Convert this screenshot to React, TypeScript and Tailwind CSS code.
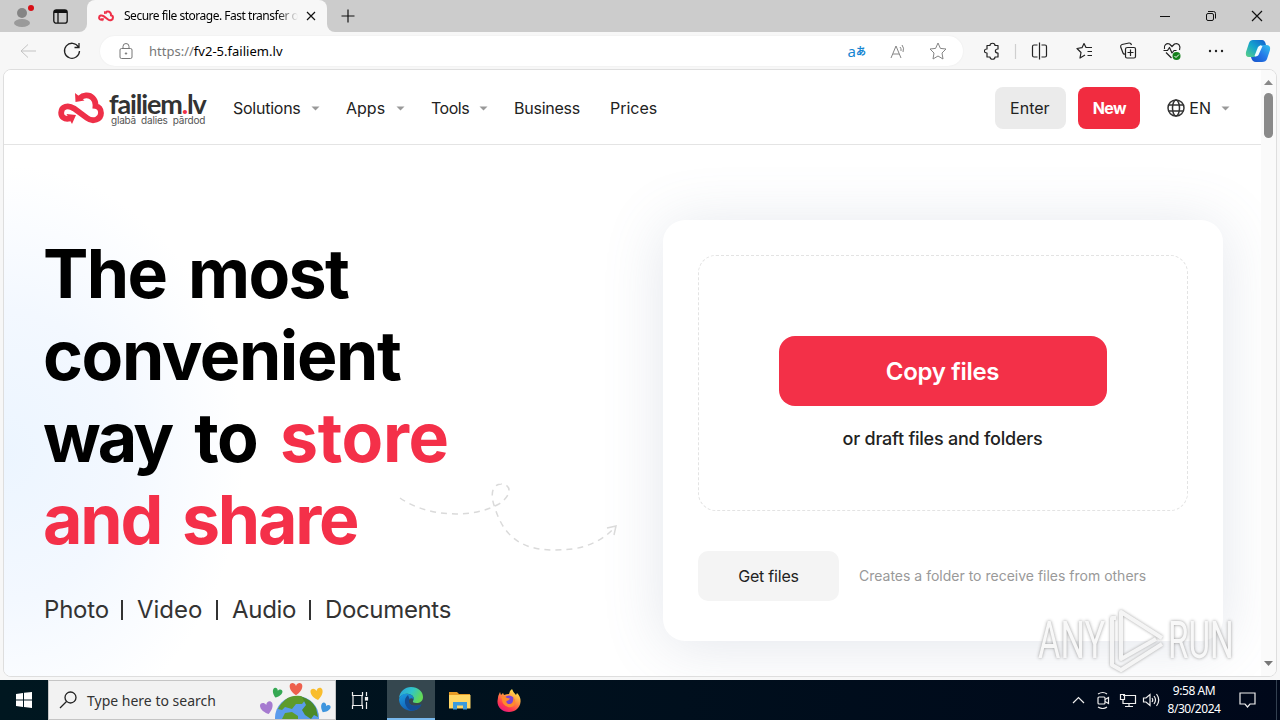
import React from 'react'

const CloudLogo: React.FC<{ className: string }> = ({ className }) => (
  <svg viewBox="0 0 46 32" className={className} fill="none" stroke="#ee3048">
    <path
      d="M12 26.500C6 28 3 24.500 3.200 20.500C3.400 14.500 10 12.500 16 16.500L29 26C35 30.500 43 27.500 43 21C43 17 40.500 14.500 37.500 14C38 7 33 3 28 3.400C25.500 3.600 24 4 22 6"
      strokeWidth="5.800"
    />
    <path d="M8.500 22L18 23L14 32ZM17 1L17.500 10L26.500 8.500Z" fill="#ee3048" stroke="none" />
  </svg>
)

const TabStrip = () => (
  <div className="flex h-8 shrink-0 bg-[#f7f7f7] text-black">
    <div className="flex w-[87px] items-center rounded-br-lg bg-[#cccccc]">
      <svg className="ml-3 h-6 w-6" viewBox="0 0 24 24">
        <circle cx="10" cy="9" r="5" fill="#858585" />
        <ellipse cx="10" cy="19" rx="8" ry="4" fill="#9a9a9a" />
        <circle cx="19" cy="4" r="3" fill="#d80f16" />
      </svg>
      <svg className="ml-[17px] h-[15px] w-[15px]" viewBox="0 0 15 15" fill="none" stroke="#111">
        <rect x=".8" y=".8" width="13.400" height="13.400" rx="2.500" strokeWidth="1.300" />
        <path d="M1 2.500H14" strokeWidth="3" />
        <path d="M5 3.500V14" strokeWidth="1.300" />
      </svg>
    </div>
    <div className="w-60 shrink-0 bg-[#cccccc]">
      <div className="flex h-8 items-center rounded-t-lg bg-[#f7f7f7] pl-[11px]">
        <CloudLogo className="h-3 w-4" />
        <span className="ml-2.5 w-[174px] overflow-hidden whitespace-nowrap text-xs tracking-[-0.49px] [mask-image:linear-gradient(to_right,black_88%,transparent)]">
          Secure file storage. Fast transfer of
        </span>
        <svg className="ml-[7px] h-3 w-3" viewBox="0 0 12 12" stroke="#111" strokeWidth="1.200">
          <path d="M2 2L10 10M10 2L2 10" />
        </svg>
      </div>
    </div>
    <div className="flex grow rounded-bl-lg bg-[#cccccc]">
      <svg className="mt-[9px] ml-[14px] h-[14px] w-[14px]" viewBox="0 0 14 14" stroke="#111" strokeWidth="1.200">
        <path d="M7 .5V13.500M.5 7H13.500" />
      </svg>
      <svg className="mt-[10px] mr-[17px] ml-auto h-3 w-[104px]" viewBox="0 0 104 12" fill="none" stroke="#111">
        <path d="M1 6.500H11" />
        <rect x="47.500" y="3.500" width="7" height="7" rx="1.500" />
        <path d="M49 1.500H54.500Q56.500 1.500 56.500 3.500V8.500" />
        <path d="M93 1L103 11M103 1L93 11" strokeWidth="1.200" />
      </svg>
    </div>
  </div>
)

const toolbarIcons = [
  { name: 'extensions', x: 0, d: 'M3 3.500H6C6 .5 11 .5 11 3.500H14V7C10.500 7 10.500 11 14 11V15H11C11 18 6 18 6 15H3V11C-.5 11-.5 7 3 7Z' },
  { name: 'split', x: 47, d: 'M6.500 3H3Q1.500 3 1.500 4.500V13.500Q1.500 15 3 15H6.500M10.500 3H14Q15.500 3 15.500 4.500V13.500Q15.500 15 14 15H10.500M8.500 .5V17.500' },
  { name: 'favorites', x: 92, d: 'M9 13L4 16L5 10.500L1 6.500L6 5.700L8 1.500L10 5.500H16M11.500 9.500H16M11.500 13.500H16' },
  { name: 'collections', x: 135.5, d: 'M6 12Q4 12.500 3.500 11L1.200 5Q.8 3 2.500 2.500L9.500 1Q11.500 .800 12 3M8 5.500H14.500Q16 5.500 16 7V14.500Q16 16 14.500 16H7.500Q6 16 6 14.500V7Q6 5.500 8 5.500M11 7.500V14M8 10.500H14' },
  { name: 'essentials', x: 179.5, d: 'M1 7C0 3 3 1 6 2L8.500 4.500L11 2C15 .5 17.500 4 16 8M2.500 10.500L8 16M0 8.500H4L6 5.500L8.500 11L10.500 8.500H13' },
]

const Toolbar = () => (
  <div className="flex h-[38px] shrink-0 items-center bg-[#f7f7f7]">
    <svg className="ml-5 h-4 w-4" viewBox="0 0 16 16" fill="none" stroke="#c3c3c3">
      <path d="M16 8H1M8 1.500L1 8L8 14.500" />
    </svg>
    <svg className="ml-[27px] h-[18px] w-[18px]" viewBox="0 0 18 18" fill="none" stroke="#222" strokeWidth="1.300">
      <path d="M15.500 5A7.500 7.500 0 1 0 16.500 9M16 1V5.500H11.500" />
    </svg>
    <div className="ml-[19px] flex h-[30px] w-[863px] items-center rounded-full bg-white pl-[19px] shadow-[0_0_2px_#00000010]">
      <svg className="h-[17px] w-[14px]" viewBox="0 0 14 17" fill="none" stroke="#777">
        <rect x="1" y="5.500" width="12" height="10" rx="1.500" />
        <path d="M4 5.500V3.500A3 3 0 0 1 10 3.500V5.500" />
        <circle cx="7" cy="10.500" r=".7" fill="#777" />
      </svg>
      <span className="mt-px ml-4 text-[13px] text-[#777]">
        https://<span className="tracking-[0.02px] text-black">fv2-5.failiem.lv</span>
      </span>
      <span className="ml-auto flex items-center text-[#1686d2]">
        <span className="text-[15px] leading-5">a</span>
        <span className="font-['Noto_Sans_CJK_JP',sans-serif] text-[10px] leading-5 font-bold">あ</span>
      </span>
      <svg className="ml-6 h-4 w-[17px]" viewBox="0 0 17 16" fill="none" stroke="#858585">
        <path d="M1 15L6 3L11 15M3 11H9M10 4Q11.500 5.500 11 8M12 2Q14.500 5 13 9" />
      </svg>
      <svg className="mr-4 ml-[22px] h-[18px] w-[18px]" viewBox="0 0 18 18" fill="none" stroke="#858585" strokeLinejoin="round">
        <path d="M9 1L11.400 6.400L17 7L13 11L14 17L9 14L4 17L5 11L1 7L6.600 6.400Z" />
      </svg>
    </div>
    <svg className="ml-[21px] h-[18px] w-[200px]" viewBox="0 0 200 18" fill="none" stroke="#222" strokeWidth="1.200" strokeLinejoin="round">
      {toolbarIcons.map((icon) => (
        <path key={icon.name} d={icon.d} transform={`translate(${icon.x})`} />
      ))}
      <path d="M31.500 2V17" stroke="#cfcfcf" />
      <circle cx="192.500" cy="14" r="4" fill="#14801b" stroke="none" />
      <path d="M190.500 14L192 15.500L195 12.500" stroke="white" strokeWidth="1" />
    </svg>
    <svg className="ml-[24px] h-1 w-4" viewBox="0 0 16 4" fill="#222">
      <circle cx="2" cy="2" r="1.200" />
      <circle cx="8" cy="2" r="1.200" />
      <circle cx="14" cy="2" r="1.200" />
    </svg>
    <svg className="ml-[21px] h-6 w-[26px]" viewBox="0 0 26 24">
      <defs>
        <linearGradient id="pilotA" x1="0" y1="1" x2="1" y2="0">
          <stop stopColor="#60d480" />
          <stop offset=".5" stopColor="#14a4cd" />
          <stop offset="1" stopColor="#145dd0" />
        </linearGradient>
        <linearGradient id="pilotB" x1="0" y1="1" x2="1" y2="0">
          <stop stopColor="#1550c8" />
          <stop offset=".5" stopColor="#2478e8" />
          <stop offset="1" stopColor="#32c4ee" />
        </linearGradient>
      </defs>
      <path d="M8 1H17Q20 1 21 6H17Q14 6 13 10L11 17Q10 20 6 18H4Q0 18 1 13L4 4Q5 1 8 1Z" fill="url(#pilotA)" />
      <path d="M16 6H21Q26 6 25 11L22 20Q21 23 17 23H11Q7 23 6 18H9Q12 18 13 14L15 8Q15.500 6 16 6Z" fill="url(#pilotB)" />
      <path d="M13 8Q15 5.500 17.500 7L13.500 16Q12 18 9.500 17Z" fill="#effcff" />
    </svg>
  </div>
)

const Caret = () => (
  <svg className="h-[5px] w-[9px]" viewBox="0 0 9 5" fill="#999">
    <path d="M.5 .5H8.500L4.500 4.500Z" />
  </svg>
)

const SiteHeader = () => (
  <header className="flex h-[75px] items-center border-b border-[#e4e4e4] bg-white pt-0.5 pl-[54px] text-[#222]">
    <CloudLogo className="h-8 w-[46px]" />
    <div className="ml-[5px] w-[100px] whitespace-nowrap">
      <div className="font-['Lato',sans-serif] text-[27px] leading-[24px] font-bold tracking-[-1.15px] text-[#333]">
        failiem<span className="text-[#ee3048]">.</span>lv
      </div>
      <div className="pl-0.5 text-[10px] leading-[9px] tracking-[-0.2px] text-[#555] [word-spacing:2.5px]">glabā dalies pārdod</div>
    </div>
    <nav className="ml-6 flex items-center text-base">
      <div className="flex w-[113px] items-center gap-[10px] tracking-[-0.25px]">Solutions <Caret /></div>
      <div className="flex w-[85px] items-center gap-[11px]">Apps <Caret /></div>
      <div className="flex w-[83px] items-center gap-[10px] tracking-[-0.5px]">Tools <Caret /></div>
      <div className="w-24 tracking-[-0.25px]">Business</div>
      <div>Prices</div>
    </nav>
    <div className="ml-auto flex items-center text-base">
      <div className="flex h-[42px] w-[71px] items-center justify-center rounded-lg bg-[#ebebeb] pr-0.5">Enter</div>
      <div className="ml-3 flex h-[42px] w-[62px] items-center justify-center rounded-lg bg-[#f12c40] font-bold tracking-[-0.6px] text-white">New</div>
      <svg className="ml-[27px] h-[18px] w-[18px]" viewBox="0 0 18 18" fill="none" stroke="#333" strokeWidth="1.500">
        <circle cx="9" cy="9" r="8" />
        <ellipse cx="9" cy="9" rx="3.500" ry="8" />
        <path d="M1.500 6H16.500M1.500 12H16.500" />
      </svg>
      <span className="mr-2.5 ml-1">EN</span>
      <Caret />
      <span className="w-[31px]" />
    </div>
  </header>
)

const Hero = () => (
  <main className="relative flex h-[532px] overflow-hidden bg-[radial-gradient(ellipse_240px_290px_at_0px_310px,#ecf5ff_0%,#f3f8ff_50%,white_100%)]">
    <section className="w-[659px] shrink-0 pt-[87px] pl-[39px]">
      <h1 className="text-[68px] leading-[82px] font-bold whitespace-nowrap text-black">
        <div className="tracking-[-1.6px] [word-spacing:7px]">The most</div>
        <div className="tracking-[-1.4px]">convenient</div>
        <div className="[word-spacing:8px]">
          <span className="tracking-[-2.8px]">way</span>
          <span className="tracking-[-1.4px]"> to </span>
          <span className="tracking-[-0.4px] text-[#f43049]">store</span>
        </div>
        <div className="tracking-[-2.2px] text-[#f43049] [word-spacing:7px]">and share</div>
      </h1>
      <div className="mt-[32px] flex items-center text-2xl leading-9 tracking-[-0.3px] text-[#333]">
        <span className="w-[78px] pl-px tracking-[-0.2px]">Photo</span><i className="h-5 w-0.5 bg-[#333]" />
        <span className="ml-[14px] w-[79px] tracking-normal">Video</span><i className="h-5 w-0.5 bg-[#333]" />
        <span className="ml-[14px] w-[77px]">Audio</span><i className="h-5 w-0.5 bg-[#333]" />
        <span className="ml-[14px] tracking-[-0.35px]">Documents</span>
      </div>
    </section>
    <svg className="absolute top-[336px] left-[392px] h-[76px] w-[230px]" viewBox="0 0 230 76" fill="none" stroke="#dadada" strokeWidth="1.500">
      <path d="M4 17C31 36 76 38 103 23C119 12 113 2 105 3C94 4 95 17 99 27C112 70 145 71 177 68C200 64 212 54 219 46" strokeDasharray="6 5" />
      <path d="M211 47L220 45L218 54" />
    </svg>
    <section className="mt-[75px] h-[421px] w-[560px] shrink-0 rounded-[22px] bg-white p-[35px] shadow-[0_5px_60px_#69789a30]">
      <div className="flex h-64 flex-col items-center rounded-[18px] border border-dashed border-[#e3e3e3] pt-20">
        <div className="flex h-[70px] w-[328px] items-center justify-center rounded-2xl bg-[#f33048] pt-px pr-px text-2xl font-semibold tracking-[-0.3px] text-white">Copy files</div>
        <div className="mt-5 pr-px text-lg leading-[26px] font-medium tracking-[-0.24px] text-[#222]">or draft files and folders</div>
      </div>
      <div className="mt-10 flex items-center">
        <div className="flex h-[50px] w-[141px] items-center justify-center rounded-[10px] bg-[#f4f4f4] text-base tracking-[-0.2px] text-[#222]">Get files</div>
        <span className="ml-5 text-sm text-[#999]">Creates a folder to receive files from others</span>
      </div>
    </section>
  </main>
)

const Scrollbar = () => (
  <div className="flex w-[15px] flex-col items-center bg-[#fafafa] pt-[10px] pb-[10px]">
    <svg className="h-[5px] w-[9px]" viewBox="0 0 9 5" fill="#888">
      <path d="M0 5H9L4.500 0Z" />
    </svg>
    <i className="mt-2 h-[45px] w-[9px] rounded-full bg-[#8a8a8a]" />
    <svg className="mt-auto h-[5px] w-[9px]" viewBox="0 0 9 5" fill="#777">
      <path d="M0 0H9L4.500 5Z" />
    </svg>
  </div>
)

const Watermark = () => (
  <div className="absolute top-[608px] left-[1038px] flex h-[66px] w-[200px] items-center font-['Roboto',sans-serif] text-[52px] opacity-90">
    <span className="w-[68px] shrink-0 origin-left scale-x-[0.66] text-[#f8f8f8] [text-shadow:0_0_4px_#888]">ANY</span>
    <svg className="h-[66px] w-[60px] shrink-0 drop-shadow-[0_0_1.5px_#999]" viewBox="0 0 60 66" fill="none" stroke="#f5f5f5" strokeWidth="4" strokeLinejoin="round">
      <path d="M10 10H6V57L15 62L56 36M15 51V4L56 30M15 12V51L50 31" />
    </svg>
    <span className="ml-0.5 w-[66px] shrink-0 origin-left scale-x-[0.64] text-[#f8f8f8] [text-shadow:0_0_4px_#888]">RUN</span>
  </div>
)

const hearts = [
  { color: '#a67bd0', place: 'translate(8 27) rotate(-15) scale(1.25)' },
  { color: '#35a853', place: 'translate(18 12) rotate(20) scale(.95)' },
  { color: '#ee604d', place: 'translate(37 8) scale(1.25)' },
  { color: '#f9bd2c', place: 'translate(58 13) rotate(-10) scale(1.2)' },
  { color: '#3d95de', place: 'translate(66 27) rotate(28) scale(.95)' },
]

const EarthHearts = () => (
  <svg className="ml-auto h-[38px] w-[76px]" viewBox="0 0 76 38">
    <circle cx="38" cy="37" r="22" fill="#5b9cec" />
    <path d="M26 19Q32 14 42 15L47 18L43 23L37 23L33 28L26 26L23 29L19 28Q21 23 26 19Z" fill="#5e9b2c" />
    <path d="M43 16Q52 18 57 27L59 36L55 34L52 38L46 34L43 29L47 24Z" fill="#4c8a27" />
    <path d="M23 38L26 32L33 31L39 35V38Z" fill="#5e9b2c" />
    {hearts.map((heart) => (
      <path
        key={heart.color}
        d="M0 5C-3 3-5.500 0-5-3C-4.500-5.500-1-5.500 0-2.500C1-5.500 4.500-5.500 5-3C5.500 0 3 3 0 5Z"
        fill={heart.color}
        transform={heart.place}
      />
    ))}
  </svg>
)

const EdgeIcon = () => (
  <svg className="h-6 w-6" viewBox="0 0 24 24">
    <defs>
      <linearGradient id="edgeTop" x1="0" y1="0" x2="1" y2=".4">
        <stop stopColor="#2c9ddc" />
        <stop offset=".55" stopColor="#30c5c9" />
        <stop offset="1" stopColor="#62d957" />
      </linearGradient>
      <linearGradient id="edgeLow" x1="0" y1="0" x2=".6" y2="1">
        <stop stopColor="#1b9de2" />
        <stop offset="1" stopColor="#1257ae" />
      </linearGradient>
    </defs>
    <path d="M0 11C1 4 6 0 12 0C19 0 24 4.500 24 10C24 14 21 16 17.500 16C14.500 16 13.500 15 14 14C16 11 14 8 10 7C6 6 2 8 0 11Z" fill="url(#edgeTop)" />
    <path d="M0 12C1 8 5 6 9 7C13 7.500 15.500 10 14.500 13C14 11 12 10.500 10.500 12C7 17 14 21 22.500 17.500C19 24 13 25 8 23C3 21 0 17 0 12Z" fill="url(#edgeLow)" />
    <path d="M9 8C4 12 5 20 12 23.500C17 23.500 21 21 22.500 17.500C14 21 8 17 10.500 12Z" fill="#144d93" />
  </svg>
)

const FolderIcon = () => (
  <svg className="h-[19px] w-[22px]" viewBox="0 0 22 19">
    <path d="M0 1H8L10 3H21V9H0Z" fill="#e69b25" />
    <path d="M0 4H21.500V17.500H0Z" fill="#ffd766" />
    <path d="M4 11H18V18.500H14V14.500H8V18.500H4Z" fill="#3b9bdd" />
  </svg>
)

const FirefoxIcon = () => (
  <svg className="h-[23px] w-6" viewBox="0 0 24 23">
    <defs>
      <linearGradient id="fox" x1=".8" y1="0" x2=".2" y2="1">
        <stop stopColor="#fff44f" />
        <stop offset=".4" stopColor="#ff9640" />
        <stop offset=".75" stopColor="#ff3750" />
        <stop offset="1" stopColor="#e31587" />
      </linearGradient>
    </defs>
    <path d="M3 3L4 6L6 4L7 6Q10 5 12 5Q12 2 15 0Q16 3 19 6L20 4Q24 8 23.500 13C23 19 18 23 12 23C5 23 0 18 .5 12Q.5 7 3 3Z" fill="url(#fox)" />
    <circle cx="12" cy="12" r="5.500" fill="#7b43d4" />
    <path d="M4 8Q7 6 10 9L13 9.500Q12 11.500 9.500 12Q9 15 13 15Q17 14 16 8Q19 11 18 15Q16 19 11 18Q5 16 5 10Z" fill="#ff8a2b" />
  </svg>
)

const Taskbar = () => (
  <footer className="flex h-10 shrink-0 items-center bg-linear-to-r from-[#001720] to-[#00081a] text-white">
    <svg className="mx-4 h-4 w-4" viewBox="0 0 16 16" fill="white">
      <path d="M0 2L7 1V7.500H0ZM8 .8L16 0V7.500H8ZM0 8.500H7V15L0 14ZM8 8.500H16V16L8 15Z" />
    </svg>
    <div className="flex h-10 w-72 items-center border border-[#c5c5c5] bg-[#f2f2f2] pl-[10px] text-[#333]">
      <svg className="h-5 w-5" viewBox="0 0 20 20" fill="none" stroke="#222" strokeWidth="1.300">
        <circle cx="11.500" cy="7.500" r="5.500" /><path d="M7.500 11.500L1 18" />
      </svg>
      <span className="ml-2 text-[14px] whitespace-nowrap">Type here to search</span>
      <EarthHearts />
    </div>
    <svg className="ml-[15px] h-[17px] w-[18px]" viewBox="0 0 18 17" fill="none" stroke="#eee" strokeWidth="1.200">
      <path d="M1.500 0V3.500H11.500V0M2 3.500V13.500M11 3.500V13.500M1.500 17V13.500H11.500V17M15.500 0V4M15.500 10V17" />
      <rect x="14.500" y="5.500" width="2" height="2.500" fill="#eee" />
    </svg>
    <div className="ml-[18px] flex h-10 w-12 items-center justify-center border-b-2 border-[#78b9ed] bg-[#35474f]">
      <EdgeIcon />
    </div>
    <div className="flex w-[49px] justify-center"><FolderIcon /></div>
    <div className="flex w-[49px] justify-center"><FirefoxIcon /></div>
    <svg className="ml-auto h-[18px] w-[88px]" viewBox="0 0 88 18" fill="none" stroke="#eee" strokeWidth="1.200">
      <path d="M1 12L6.500 6.500L12 12" />
      <rect x="26" y="6" width="7" height="7" rx="1" />
      <path d="M33 8.500L36.500 6.500V12.500L33 10.500M26 3Q31 0 35 3M26 16Q31 19 35 16" />
      <path d="M51 4.500H63.500V12.500H51V9M57 12.500V15.500M53 15.500H61M48.500 3.500H52.500V8.500H48.500Z" />
      <path d="M71.500 7H74L78 3.500V14.500L74 11H71.500ZM80 7Q81.500 9 80 11M82 5Q85 9 82 13M84.500 3Q89 9 84.500 15" />
    </svg>
    <div className="ml-[7px] w-[54px] text-center text-xs leading-[18px] tracking-[-0.45px] whitespace-nowrap">9:58 AM<br />8/30/2024</div>
    <svg className="ml-[18px] h-4 w-[17px]" viewBox="0 0 17 16" fill="none" stroke="#eee" strokeWidth="1.200">
      <path d="M1 1H16V12H11L8.500 15L6 12H1Z" />
    </svg>
    <i className="mr-[3px] ml-5 h-10 w-px bg-[#334050]" />
  </footer>
)

const App: React.FC = () => {
  return (
    <div className="relative flex h-[720px] w-[1280px] flex-col overflow-hidden bg-[#f7f7f7] font-['Noto_Sans',sans-serif]">
      <TabStrip />
      <Toolbar />
      <div className="mx-[3px] -mt-px mb-[3px] flex h-[608px] overflow-hidden rounded-lg border border-[#dedede] bg-white font-['Inter',sans-serif]">
        <div className="w-[1257px] shrink-0">
          <SiteHeader />
          <Hero />
        </div>
        <Scrollbar />
      </div>
      <Watermark />
      <Taskbar />
    </div>
  )
}

export default App
